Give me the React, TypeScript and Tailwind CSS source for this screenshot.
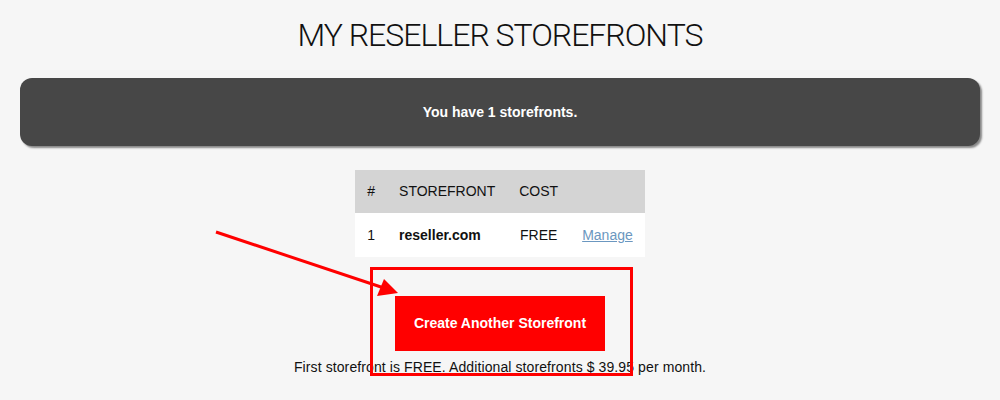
import React from "react";

export default function App() {
  return (
    <div
      className="relative w-[1000px] h-[400px] overflow-hidden bg-[#f6f6f6] text-[#111]"
      style={{ fontFamily: '"Liberation Sans", Arial, sans-serif' }}
    >
      <div className="flex flex-col items-center">
        <h1
          className="mt-[15px] h-[40px] leading-[40px] text-[32px] font-light text-[#111] tracking-[-1px]"
          style={{ fontFamily: 'Roboto, "Liberation Sans", sans-serif' }}
        >
          MY RESELLER STOREFRONTS
        </h1>
        <div className="mt-[23px] w-[960px] h-[68px] rounded-[12px] bg-[#474747] shadow-[2px_2px_2px_rgba(0,0,0,0.45)] flex items-center justify-center">
          <span className="text-white text-[14px] font-bold">You have 1 storefronts.</span>
        </div>
        <table className="mt-[24px] text-[14px] border-collapse">
          <thead>
            <tr className="bg-[#d4d4d4] h-[43px]">
              <th className="px-3 text-left font-normal">#</th>
              <th className="px-3 text-left font-normal">STOREFRONT</th>
              <th className="px-3 text-left font-normal">COST</th>
              <th className="px-3 text-left font-normal">
                <span className="invisible">Manage</span>
              </th>
            </tr>
          </thead>
          <tbody>
            <tr className="bg-white h-[44px]">
              <td className="px-3">1</td>
              <td className="px-3 font-bold">reseller.com</td>
              <td className="px-3 text-center">FREE</td>
              <td className="px-3">
                <a className="text-[#6b97c0] underline" href="#">
                  Manage
                </a>
              </td>
            </tr>
          </tbody>
        </table>
        <button className="mt-[39px] w-[210px] h-[55px] bg-[#ff0000] text-white text-[14px] font-bold">
          Create Another Storefront
        </button>
        <p className="mt-[6px] text-[14px] leading-[20px] text-[#111] tracking-[0.1px]">
          First storefront is FREE. Additional storefronts $ 39.95 per month.
        </p>
      </div>

      {/* annotations */}
      <div className="absolute left-[370px] top-[267px] w-[263px] h-[109px] border-[3px] border-[#ff0000]" />
      <svg className="absolute left-0 top-0" width="1000" height="400" viewBox="0 0 1000 400">
        <line x1="216" y1="232" x2="384" y2="288" stroke="#ff0000" strokeWidth="3" />
        <polygon points="398,293 384,279 377,296" fill="#ff0000" />
      </svg>
    </div>
  );
}
